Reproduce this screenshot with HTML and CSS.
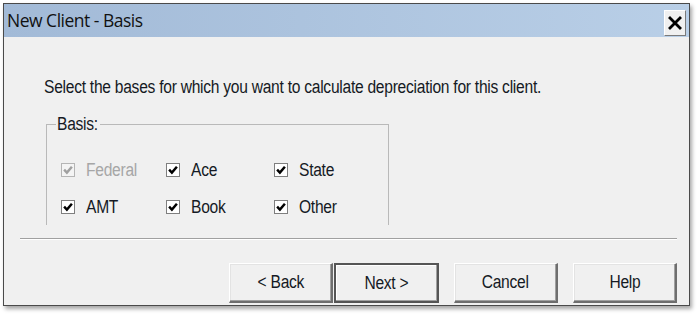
FILE: index.html
```html
<!DOCTYPE html>
<html>
<head>
<meta charset="utf-8">
<link rel="stylesheet" href="styles.css">
</head>
<body>
<div class="dialog">
  <div class="titlebar">
    <span class="title">New Client - Basis</span>
    <span class="close">
      <svg width="14" height="14" viewBox="0 0 14 14"><path d="M2 2 L12 12 M12 2 L2 12" stroke="#000" stroke-width="2.8" stroke-linecap="square"/></svg>
    </span>
  </div>
  <div class="content">
    <p class="intro"><span class="txt">Select the bases for which you want to calculate depreciation for this client.</span></p>
    <fieldset class="group">
      <legend class="legend"><span class="txt">Basis:</span></legend>
      <div class="grid">
        <label class="opt disabled"><span class="box"><svg viewBox="0 0 9 9"><path d="M1 4.2 L3.5 6.8 L8 1.5" /></svg></span><span class="txt">Federal</span></label>
        <label class="opt"><span class="box"><svg viewBox="0 0 9 9"><path d="M1 4.2 L3.5 6.8 L8 1.5" /></svg></span><span class="txt">Ace</span></label>
        <label class="opt"><span class="box"><svg viewBox="0 0 9 9"><path d="M1 4.2 L3.5 6.8 L8 1.5" /></svg></span><span class="txt">State</span></label>
        <label class="opt"><span class="box"><svg viewBox="0 0 9 9"><path d="M1 4.2 L3.5 6.8 L8 1.5" /></svg></span><span class="txt">AMT</span></label>
        <label class="opt"><span class="box"><svg viewBox="0 0 9 9"><path d="M1 4.2 L3.5 6.8 L8 1.5" /></svg></span><span class="txt">Book</span></label>
        <label class="opt"><span class="box"><svg viewBox="0 0 9 9"><path d="M1 4.2 L3.5 6.8 L8 1.5" /></svg></span><span class="txt">Other</span></label>
      </div>
    </fieldset>
    <div class="separator"></div>
    <div class="buttons">
      <span class="btn"><span class="txt c">&lt; Back</span></span>
      <span class="btn default"><span class="txt c">Next &gt;</span></span>
      <span class="btn gap"><span class="txt c">Cancel</span></span>
      <span class="btn gap"><span class="txt c">Help</span></span>
    </div>
  </div>
</div>
</body>
</html>
```
FILE: styles.css
```css
html, body {
  margin: 0;
  padding: 0;
  background: #ffffff;
}
body {
  width: 700px;
  height: 316px;
  overflow: hidden;
  font-family: "Liberation Sans", Arial, sans-serif;
  color: #151a24;
}
.dialog {
  margin: 3px 0 0 3px;
  width: 685px;
  height: 301px;
  border: 1px solid #4a4a4a;
  background: #f0f0f0;
  box-shadow: 2px 3px 4px rgba(0,0,0,0.35);
  display: flex;
  flex-direction: column;
}
.titlebar {
  height: 33px;
  background: linear-gradient(to right, #a2bad7, #b9cfe7);
  display: flex;
  align-items: center;
  justify-content: space-between;
  padding: 0 2px 0 3px;
}
.title {
  font-family: "Open Sans", "Liberation Sans", sans-serif;
  font-size: 17.5px;
  letter-spacing: -0.5px;
  color: #111;
  margin-top: -1px;
}
.close {
  width: 20px;
  height: 24px;
  margin-top: 4px;
  margin-right: 1px;
  background: #f0f0f0;
  border-top: 1px solid #ffffff;
  border-left: 1px solid #ffffff;
  border-right: 1px solid #7a7a7a;
  border-bottom: 1px solid #7a7a7a;
  display: flex;
  align-items: center;
  justify-content: center;
}
.close svg { display: block; }
.content {
  flex: 1;
  display: flex;
  flex-direction: column;
  padding: 0 12px 0 16px;
  font-size: 18px;
  letter-spacing: -0.3px;
}
.txt {
  display: inline-block;
  transform: scaleX(0.866);
  transform-origin: left center;
  white-space: nowrap;
}
.txt.c { transform-origin: center center; }
.intro {
  margin: 40px 0 0 24px;
  line-height: 20px;
}
.group {
  margin: 19px 0 0 26px;
  width: 343px;
  height: 109px;
  box-sizing: border-box;
  border: 1px solid #b9b9b9;
  border-bottom: none;
  padding: 0 0 0 14px;
  min-width: 0;
}
.legend {
  padding: 0 2px 0 1px;
  margin-left: -5px;
  line-height: 16px;
}
.legend .txt { margin-right: -6px; }
.grid {
  display: grid;
  grid-template-columns: 105px 108px 100px;
  grid-auto-rows: 37px;
  margin-top: 26px;
}
.opt {
  display: flex;
  align-items: center;
  height: 24px;
  gap: 11px;
}
.box {
  width: 12px;
  height: 12px;
  border: 1px solid #7f7f7f;
  background: #ffffff;
  display: flex;
  align-items: center;
  justify-content: center;
}
.box svg {
  width: 10px;
  height: 10px;
  fill: none;
  stroke: #000;
  stroke-width: 2.2;
}
.disabled { color: #a6a6a6; }
.disabled .box { border-color: #b5b5b5; background: #f4f4f4; }
.disabled .box svg { stroke: #a0a0a0; }
.separator {
  margin: 13px 0 0 0;
  height: 1px;
  background: #a0a0a0;
  border-bottom: 1px solid #ffffff;
}
.buttons {
  display: flex;
  justify-content: flex-end;
  margin-top: 23px;
}
.btn {
  width: 104px;
  height: 40px;
  box-sizing: border-box;
  display: flex;
  align-items: center;
  justify-content: center;
  background: #f0f0f0;
  border-top: 1px solid #ffffff;
  border-left: 1px solid #ffffff;
  border-right: 2px solid #6e6e6e;
  border-bottom: 2px solid #6e6e6e;
  box-shadow: inset -1px -1px 0 #a0a0a0, inset 1px 1px 0 #e3e3e3;
  margin-left: 1px;
}
.btn.default {
  width: 105px;
  border: 2px solid #555;
  box-shadow: inset -1px -1px 0 #a0a0a0, inset 1px 1px 0 #ffffff;
}
.btn.gap { margin-left: 15px; }
```
